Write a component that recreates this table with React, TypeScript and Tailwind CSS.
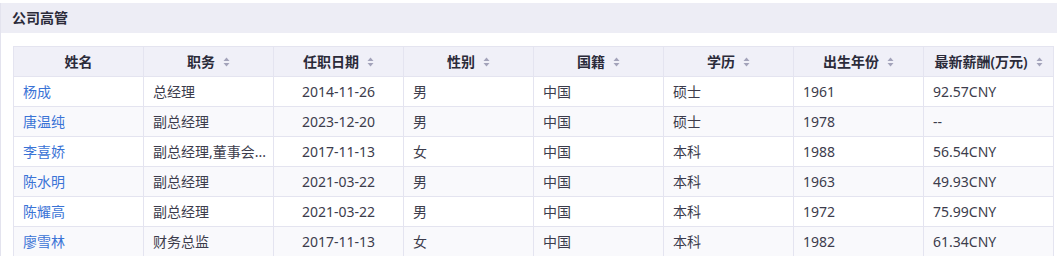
const columns = [
  { title: '姓名', sort: false },
  { title: '职务', sort: true },
  { title: '任职日期', sort: true },
  { title: '性别', sort: true },
  { title: '国籍', sort: true },
  { title: '学历', sort: true },
  { title: '出生年份', sort: true },
  { title: '最新薪酬(万元)', sort: true },
];

const rows = [
  ['杨成', '总经理', '2014-11-26', '男', '中国', '硕士', '1961', '92.57CNY'],
  ['唐温纯', '副总经理', '2023-12-20', '男', '中国', '硕士', '1978', '--'],
  ['李喜娇', '副总经理,董事会...', '2017-11-13', '女', '中国', '本科', '1988', '56.54CNY'],
  ['陈水明', '副总经理', '2021-03-22', '男', '中国', '本科', '1963', '49.93CNY'],
  ['陈耀高', '副总经理', '2021-03-22', '男', '中国', '本科', '1972', '75.99CNY'],
  ['廖雪林', '财务总监', '2017-11-13', '女', '中国', '本科', '1982', '61.34CNY'],
];

function SortIcon() {
  return (
    <svg width="7" height="10" viewBox="0 0 7 10" className="ml-[8px] shrink-0">
      <path d="M3.5 0.5 L6.5 4 L0.5 4 Z" fill="#a3a3ba" />
      <path d="M3.5 9.5 L6.5 6 L0.5 6 Z" fill="#a3a3ba" />
    </svg>
  );
}

export default function App() {
  return (
    <div
      className="w-[1057px] h-[256px] overflow-hidden bg-white pt-[3px]"
      style={{ fontFamily: '"Noto Sans", "Noto Sans CJK SC", sans-serif' }}
    >
      <div className="h-full border-l border-[#e3e3ee]">
        <div className="h-[30px] bg-[#ededf5] flex items-center pl-[11px] pb-[1px] text-[14px] font-semibold text-[#2b2b3a]">
          公司高管
        </div>
        <div className="pt-[13px] pl-[12px] pr-[2px]">
          <table className="border-collapse table-fixed w-[1041px] text-[14px]">
            <colgroup>
              {columns.map((c) => (
                <col key={c.title} className="w-[130px]" />
              ))}
            </colgroup>
            <thead>
              <tr className="h-[30px] bg-[#f0f0f8]">
                {columns.map((c) => (
                  <th
                    key={c.title}
                    className="border border-[#e4e4f0] p-0 font-semibold text-[#2b2b3a] text-[14px]"
                  >
                    <div className="flex items-center justify-center">
                      <span>{c.title}</span>
                      {c.sort && <SortIcon />}
                    </div>
                  </th>
                ))}
              </tr>
            </thead>
            <tbody>
              {rows.map((r, i) => (
                <tr key={r[0]} className={`h-[30px] ${i % 2 === 1 ? 'bg-[#f9f9fc]' : 'bg-white'}`}>
                  {r.map((v, j) => (
                    <td
                      key={j}
                      className={`border border-[#e4e4f0] px-[9px] py-0 whitespace-nowrap overflow-hidden ${
                        j === 0 ? 'text-[#3a73d6]' : 'text-[#3c3c4c]'
                      } ${j === 2 ? 'text-center' : 'text-left'}`}
                    >
                      {v}
                    </td>
                  ))}
                </tr>
              ))}
            </tbody>
          </table>
        </div>
      </div>
    </div>
  );
}
